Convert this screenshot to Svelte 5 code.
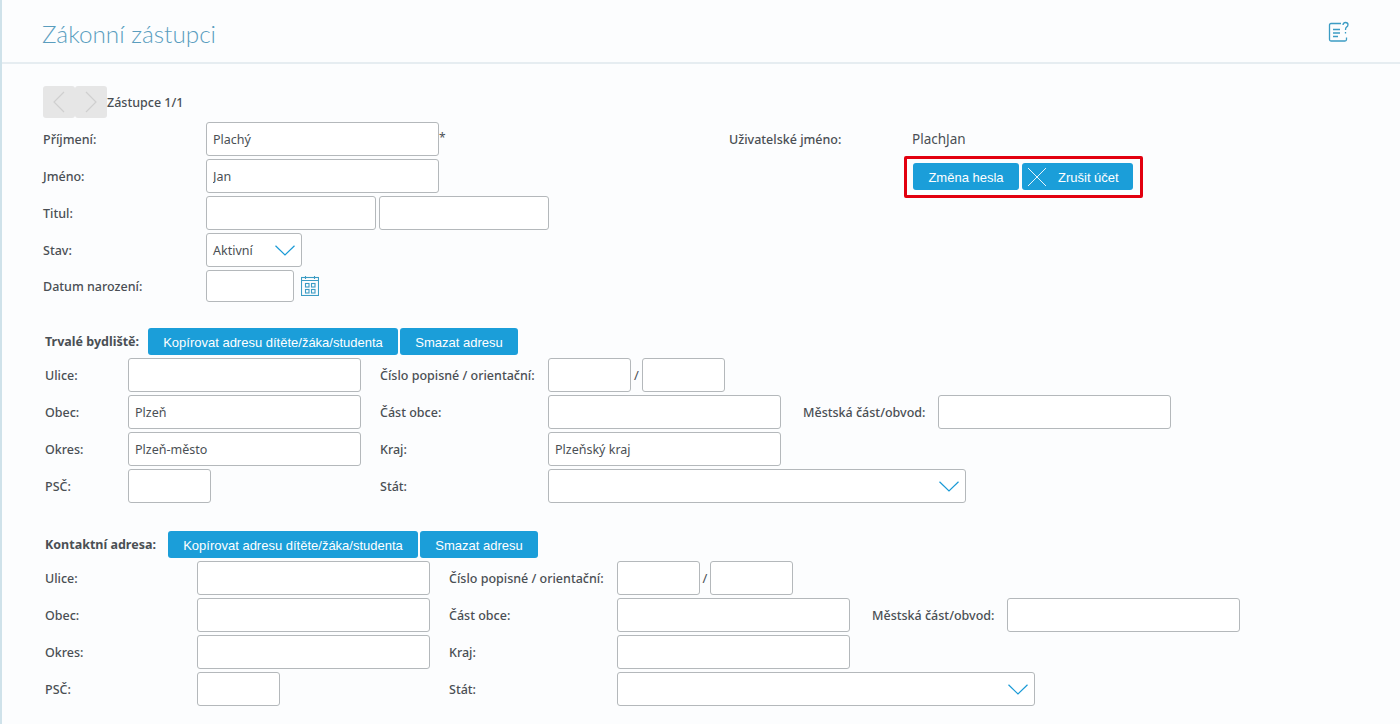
<script>
	const addresses = [
		{
			title: 'Trvalé bydliště:',
			labelWidth: 83,
			titleWidth: 103,
			slashWidth: 11,
			street: '',
			city: 'Plzeň',
			district: 'Plzeň-město',
			region: 'Plzeňský kraj'
		},
		{
			title: 'Kontaktní adresa:',
			labelWidth: 152,
			titleWidth: 123,
			slashWidth: 10,
			street: '',
			city: '',
			district: '',
			region: ''
		}
	];
</script>

{#snippet chevron()}
	<svg class="chevron" width="20" height="11" viewBox="0 0 20 11" fill="none">
		<path d="M0.5 0.8 L10 10 L19.5 0.8" stroke="#1a9ad6" stroke-width="1.2" />
	</svg>
{/snippet}

<div class="page">
	<header class="top">
		<h1>Zákonní zástupci</h1>
		<svg class="help" width="22" height="22" viewBox="0 0 22 22" fill="none" stroke="#3b9cc4" stroke-width="1.3">
			<path d="M13 3.5 H3 Q1.5 3.5 1.5 5 V19.5 Q1.5 21 3 21 H17 Q18.5 21 18.5 19.5 V17.5" />
			<path d="M5 9.5 H12 M5 13 H12 M5 16.5 H10" />
			<path d="M15 5 Q15 2.5 17.5 2.5 Q20 2.5 20 4.7 Q20 6.3 18.5 7.1 Q17.5 7.7 17.5 10" />
			<path d="M17.5 12 V13.5" />
		</svg>
	</header>

	<main>
		<div class="pager">
			<div class="nav">
				<span class="nav-btn">
					<svg width="14" height="24" viewBox="0 0 14 24" fill="none"><path d="M12 2 L2 12 L12 22" stroke="#cfcfcf" stroke-width="1.2" /></svg>
				</span>
				<span class="nav-btn">
					<svg width="14" height="24" viewBox="0 0 14 24" fill="none"><path d="M2 2 L12 12 L2 22" stroke="#cfcfcf" stroke-width="1.2" /></svg>
				</span>
			</div>
			<span class="pager-text">Zástupce 1/1</span>
		</div>

		<div class="person">
			<div class="person-left">
				<div class="row">
					<label class="label person-label" for="surname">Příjmení:</label>
					<input id="surname" class="input w-long" value="Plachý" />
					<span class="required">*</span>
				</div>
				<div class="row">
					<label class="label person-label" for="name">Jméno:</label>
					<input id="name" class="input w-long" value="Jan" />
				</div>
				<div class="row">
					<span class="label person-label">Titul:</span>
					<input class="input w-title" />
					<input class="input w-title" />
				</div>
				<div class="row">
					<span class="label person-label">Stav:</span>
					<div class="input select w-state">
						<span>Aktivní</span>
						{@render chevron()}
					</div>
				</div>
				<div class="row row-date">
					<span class="label person-label">Datum narození:</span>
					<input class="input w-date" />
					<svg class="calendar" width="18" height="20" viewBox="0 0 18 20" fill="none" stroke="#3b9cc4" stroke-width="1.1">
						<rect x="0.5" y="1.5" width="17" height="18" />
						<path d="M0.5 4.5 H17.5 M4.5 0 V3 M13.5 0 V3" />
						<rect x="4.5" y="7.5" width="3.5" height="3.5" />
						<rect x="10.5" y="7.5" width="3.5" height="3.5" />
						<rect x="4.5" y="13.5" width="3.5" height="3.5" />
						<rect x="10.5" y="13.5" width="3.5" height="3.5" />
					</svg>
				</div>
			</div>

			<div class="person-right">
				<div class="account-name">
					<span class="label account-label">Uživatelské jméno:</span>
					<span class="account-value">PlachJan</span>
				</div>
				<div class="account-actions">
					<button class="btn">Změna hesla</button>
					<button class="btn btn-cancel">
						<svg width="18" height="18" viewBox="0 0 18 18" fill="none"><path d="M0 0 L18 18 M18 0 L0 18" stroke="#fff" stroke-width="0.9" /></svg>
						Zrušit účet
					</button>
				</div>
			</div>
		</div>

		{#each addresses as address}
			<section class="address">
				<div class="address-head">
					<span class="address-title" style="width: {address.titleWidth}px">{address.title}</span>
					<button class="btn btn-copy">Kopírovat adresu dítěte/žáka/studenta</button>
					<button class="btn btn-clear">Smazat adresu</button>
				</div>
				<div class="row">
					<span class="label" style="width: {address.labelWidth}px">Ulice:</span>
					<input class="input w-long" value={address.street} />
					<span class="label second">Číslo popisné / orientační:</span>
					<input class="input w-short" />
					<span class="slash" style="width: {address.slashWidth}px">/</span>
					<input class="input w-short" />
				</div>
				<div class="row">
					<span class="label" style="width: {address.labelWidth}px">Obec:</span>
					<input class="input w-long" value={address.city} />
					<span class="label second">Část obce:</span>
					<input class="input w-long" />
					<span class="label third">Městská část/obvod:</span>
					<input class="input w-long" />
				</div>
				<div class="row">
					<span class="label" style="width: {address.labelWidth}px">Okres:</span>
					<input class="input w-long" value={address.district} />
					<span class="label second">Kraj:</span>
					<input class="input w-long" value={address.region} />
				</div>
				<div class="row">
					<span class="label" style="width: {address.labelWidth}px">PSČ:</span>
					<input class="input w-short" />
					<span class="label second psc-gap">Stát:</span>
					<div class="input select w-country">
						<span></span>
						{@render chevron()}
					</div>
				</div>
			</section>
		{/each}
	</main>
</div>

<style>
	:global(body) {
		margin: 0;
		background: #fcfdfe;
		font-family: "Noto Sans", "Liberation Sans", sans-serif;
		font-size: 13px;
		color: #4a4f54;
	}

	.page {
		height: 724px;
		overflow: hidden;
		border-left: 2px solid #cfe2ea;
		box-sizing: border-box;
	}

	.top {
		height: 64px;
		box-sizing: border-box;
		border-bottom: 2px solid #e6edf1;
		display: flex;
		align-items: center;
		justify-content: space-between;
		padding: 0 50px 0 40px;
	}

	h1 {
		margin: 5px 0 0;
		font-family: Lato, sans-serif;
		font-weight: 300;
		font-size: 24.3px;
		color: #5a9dbe;
	}

	main {
		padding: 22px 0 0 41px;
	}

	.pager {
		display: flex;
		align-items: center;
		height: 32px;
		margin-bottom: 4px;
	}

	.nav {
		display: flex;
	}

	.nav-btn {
		width: 32px;
		height: 32px;
		background: #e6e6e6;
		border-radius: 3px;
		display: flex;
		align-items: center;
		justify-content: center;
	}

	.pager-text {
		font-weight: 500;
		font-size: 12.5px;
	}

	.person {
		display: flex;
	}

	.person-left {
		width: 686px;
	}

	.row {
		display: flex;
		align-items: center;
		height: 34px;
		margin-bottom: 3px;
	}

	.row-date {
		height: 32px;
		margin-bottom: 1px;
	}

	.label {
		flex: none;
		font-weight: 500;
		font-size: 12.5px;
		white-space: nowrap;
	}

	.person-label {
		width: 163px;
	}

	.input {
		box-sizing: border-box;
		height: 34px;
		border: 1px solid #b4b8bb;
		border-radius: 3px;
		background: #fff;
		padding: 0 6px;
		font: inherit;
		font-size: 12.5px;
		color: #4a4f54;
		margin: 0;
		flex: none;
		outline: none;
	}

	.w-long {
		width: 233px;
	}

	.w-title {
		width: 170px;
		margin-right: 3px;
	}

	.w-state {
		width: 96px;
	}

	.w-date {
		width: 88px;
		height: 32px;
	}

	.w-short {
		width: 83px;
	}

	.w-country {
		width: 418px;
	}

	.select {
		display: flex;
		align-items: center;
		justify-content: space-between;
		padding-right: 6px;
	}

	.required {
		align-self: flex-start;
		margin-top: 7px;
		font-size: 12px;
	}

	.calendar {
		margin-left: 7px;
	}

	.account-name {
		display: flex;
		align-items: center;
		height: 34px;
	}

	.account-label {
		width: 183px;
	}

	.account-value {
		font-size: 13.5px;
	}

	.account-actions {
		display: flex;
		gap: 3px;
		width: 239px;
		height: 42px;
		box-sizing: border-box;
		margin-left: 175px;
		border: 3px solid #e2000f;
		border-radius: 2px;
		padding: 4px 6px;
	}

	.btn {
		border: none;
		border-radius: 3px;
		background: #1b9ed9;
		color: #fff;
		font-family: "Liberation Sans", Arial, sans-serif;
		font-size: 13px;
		padding: 1px 0 0;
		height: 27px;
		flex: none;
		display: flex;
		align-items: center;
		justify-content: center;
	}

	.account-actions .btn {
		width: 106px;
	}

	.account-actions .btn-cancel {
		width: 111px;
		gap: 12px;
		justify-content: flex-start;
		padding-left: 6px;
	}

	.btn-cancel svg {
		margin-top: -1px;
	}

	.address {
		margin-top: 25px;
		padding-left: 2px;
	}

	.address + .address {
		margin-top: 28px;
	}

	.address-head {
		display: flex;
		align-items: center;
		height: 27px;
		margin-bottom: 3px;
	}

	.address-title {
		flex: none;
		font-weight: 700;
		font-size: 12.5px;
		white-space: nowrap;
	}

	.btn-copy {
		width: 250px;
		margin-right: 2px;
	}

	.btn-clear {
		width: 118px;
	}

	.second {
		width: 168px;
		margin-left: 19px;
	}

	.psc-gap {
		margin-left: 169px;
	}

	.third {
		width: 135px;
		margin-left: 22px;
	}

	.slash {
		text-align: center;
	}
</style>
